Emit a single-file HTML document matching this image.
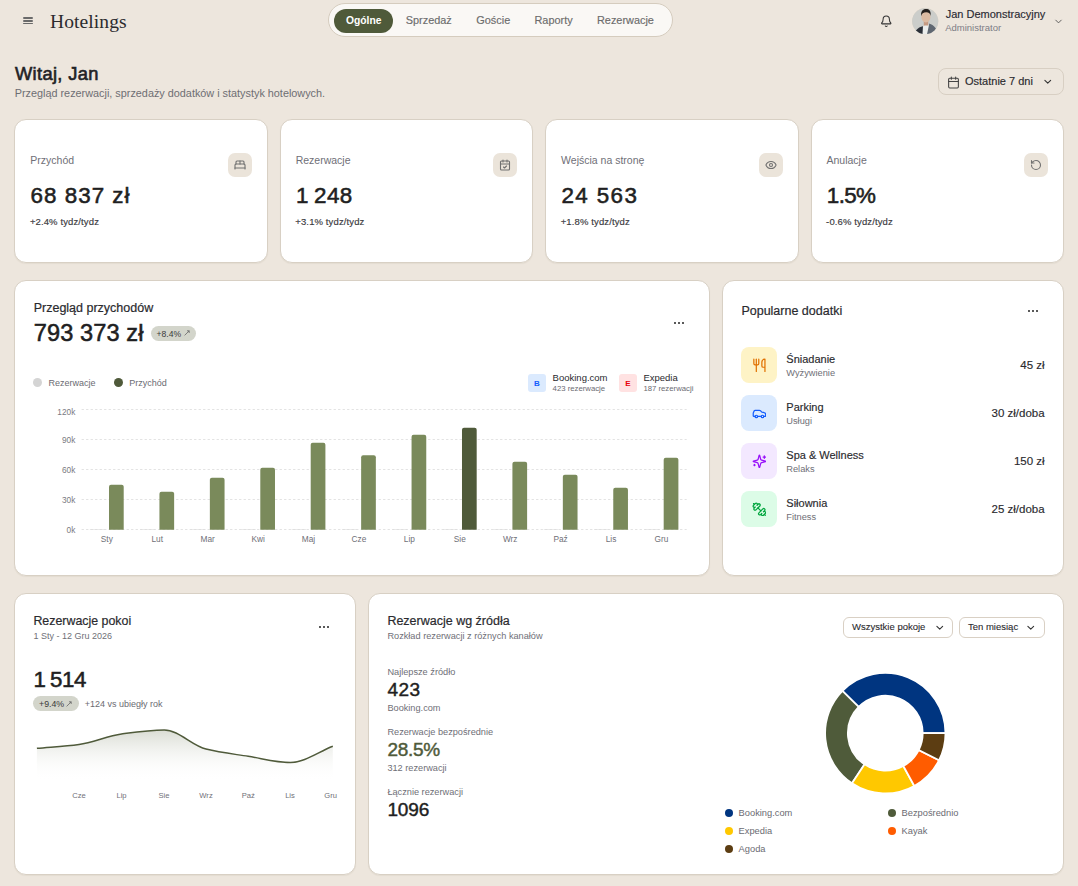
<!DOCTYPE html><html><head><meta charset="utf-8"><style>
html,body{margin:0;padding:0;}
body{width:1078px;height:886px;background:#ede6dd;position:relative;overflow:hidden;font-family:"Liberation Sans", sans-serif;}
.a{position:absolute;}
.t{position:absolute;white-space:nowrap;line-height:1;}
</style></head><body>
<div class="a" style="left:23.00px;top:17.25px;width:9.80px;height:1.50px;background:#6a6a6a;border-radius:1px;"></div>
<div class="a" style="left:23.00px;top:20.10px;width:9.80px;height:1.50px;background:#6a6a6a;border-radius:1px;"></div>
<div class="a" style="left:23.00px;top:22.95px;width:9.80px;height:1.50px;background:#6a6a6a;border-radius:1px;"></div>
<div class="t" style="top:12.47px;font-size:19.5px;font-weight:400;color:#2b2b2e;letter-spacing:0.1px;left:50.00px;font-family:'Liberation Serif', serif;">Hotelings</div>
<div class="a" style="left:327.60px;top:3.40px;width:345.20px;height:34.00px;background:#faf8f5;border:1px solid #d5ccbe;border-radius:17px;box-sizing:border-box;"></div>
<div class="a" style="left:334.00px;top:9.00px;width:59.00px;height:23.80px;background:#4f5a3a;border-radius:12px;"></div>
<div class="t" style="top:15.78px;font-size:10.3px;font-weight:700;color:#ffffff;left:346.00px;">Ogólne</div>
<div class="t" style="top:15.27px;font-size:10.9px;font-weight:400;color:#6c6c6c;left:405.80px;-webkit-text-stroke:0.15px #6c6c6c;">Sprzedaż</div>
<div class="t" style="top:15.27px;font-size:10.9px;font-weight:400;color:#6c6c6c;left:476.30px;-webkit-text-stroke:0.15px #6c6c6c;">Goście</div>
<div class="t" style="top:15.27px;font-size:10.9px;font-weight:400;color:#6c6c6c;left:534.50px;-webkit-text-stroke:0.15px #6c6c6c;">Raporty</div>
<div class="t" style="top:15.27px;font-size:10.9px;font-weight:400;color:#6c6c6c;left:597.00px;-webkit-text-stroke:0.15px #6c6c6c;">Rezerwacje</div>
<svg class="a" style="left:880.00px;top:14.50px;" width="12.5" height="12.5" viewBox="0 0 24 24" fill="none" stroke="#333" stroke-width="2" stroke-linecap="round" stroke-linejoin="round"><path d="M10.268 21a2 2 0 0 0 3.464 0"/><path d="M3.262 15.326A1 1 0 0 0 4 17h16a1 1 0 0 0 .74-1.673C19.41 13.956 18 12.499 18 8A6 6 0 0 0 6 8c0 4.499-1.411 5.956-2.738 7.326"/></svg>
<svg class="a" style="left:912.3px;top:7.5px" width="26.4" height="26.4" viewBox="0 0 26.4 26.4">
<defs><clipPath id="av"><circle cx="13.2" cy="13.2" r="13"/></clipPath></defs>
<circle cx="13.2" cy="13.2" r="13.1" fill="#dcd3c4"/>
<g clip-path="url(#av)">
<rect width="27" height="27" fill="#cbcdca"/>
<path d="M3.5 23 C6 19.5 8.5 18.6 11 18.2 L12 26.4 L4 26.4 Z" fill="#2b3038"/>
<path d="M10.5 26.4 L11 18.5 L13 17.2 L16 16 L17.5 19.5 L15.3 26.4 Z" fill="#eceeec"/>
<path d="M15 26.4 L17.3 15.6 C19.5 16.3 21.5 17.5 23.5 20 L26.4 23.5 L26.4 26.4 Z" fill="#5f6771"/>
<rect x="11.8" y="12" width="4.4" height="5.5" fill="#c59a82"/>
<ellipse cx="13.9" cy="8.7" rx="4.6" ry="5.8" fill="#dcbba2"/>
<path d="M9.1 8.2 C8.6 3 10.8 1 14 1 C17.2 1 19.2 2.8 18.7 8 C18.2 5.6 17 4.4 14.2 4.3 C11.4 4.3 9.8 5.4 9.1 8.2 Z" fill="#25201d"/>
</g></svg>
<div class="t" style="top:9.29px;font-size:11px;font-weight:400;color:#2a2a33;left:945.70px;-webkit-text-stroke:0.15px #2a2a33;">Jan Demonstracyjny</div>
<div class="t" style="top:22.96px;font-size:9.5px;font-weight:400;color:#7d7d86;left:945.20px;">Administrator</div>
<svg class="a" style="left:1052.50px;top:16.00px;" width="11" height="11" viewBox="0 0 24 24" fill="none" stroke="#555" stroke-width="2" stroke-linecap="round" stroke-linejoin="round"><path d="m6 9 6 6 6-6"/></svg>
<div class="t" style="top:64.91px;font-size:18.3px;font-weight:400;color:#222225;letter-spacing:0.35px;left:15.00px;-webkit-text-stroke:0.6px #222225;">Witaj, Jan</div>
<div class="t" style="top:88.32px;font-size:10.85px;font-weight:400;color:#6e6e73;left:14.70px;">Przegląd rezerwacji, sprzedaży dodatków i statystyk hotelowych.</div>
<div class="a" style="left:937.50px;top:68.00px;width:126.00px;height:26.50px;border:1px solid #d8cfc3;border-radius:8px;box-sizing:border-box;background:#ede6dd;"></div>
<svg class="a" style="left:946.50px;top:75.50px;" width="13" height="13" viewBox="0 0 24 24" fill="none" stroke="#444" stroke-width="2" stroke-linecap="round" stroke-linejoin="round"><path d="M8 2v4"/><path d="M16 2v4"/><rect width="18" height="18" x="3" y="4" rx="2"/><path d="M3 10h18"/></svg>
<div class="t" style="top:76.19px;font-size:11px;font-weight:400;color:#2a2a2e;left:965.00px;-webkit-text-stroke:0.15px #2a2a2e;">Ostatnie 7 dni</div>
<svg class="a" style="left:1042.30px;top:75.60px;" width="11.5" height="11.5" viewBox="0 0 24 24" fill="none" stroke="#333" stroke-width="2.3" stroke-linecap="round" stroke-linejoin="round"><path d="m6 9 6 6 6-6"/></svg>
<div class="a" style="left:14.00px;top:119.00px;width:254.00px;height:144.00px;background:#fff;border:1px solid #d8d0c4;border-radius:12px;box-sizing:border-box;box-shadow:0 1px 1px rgba(80,60,30,0.06);"></div>
<div class="t" style="top:155.21px;font-size:10.5px;font-weight:400;color:#6f6f77;left:30.30px;">Przychód</div>
<div class="a" style="left:228.20px;top:153.00px;width:24.00px;height:24.00px;background:#ebe4da;border-radius:7px;"></div>
<svg class="a" style="left:234.20px;top:158.60px;" width="12" height="12" viewBox="0 0 24 24" fill="none" stroke="#707070" stroke-width="2.2" stroke-linecap="round" stroke-linejoin="round"><path d="M2 20v-8a2 2 0 0 1 2-2h16a2 2 0 0 1 2 2v8"/><path d="M4 10V6a2 2 0 0 1 2-2h12a2 2 0 0 1 2 2v4"/><path d="M12 4v6"/><path d="M2 18h20"/></svg>
<div class="t" style="top:185.24px;font-size:22.4px;font-weight:400;color:#1f1f22;letter-spacing:1.0px;left:30.60px;-webkit-text-stroke:0.55px #1f1f22;">68 837 zł</div>
<div class="t" style="top:217.16px;font-size:9.5px;font-weight:400;color:#3a3a40;letter-spacing:0.12px;left:29.90px;-webkit-text-stroke:0.15px #3a3a40;">+2.4% tydz/tydz</div>
<div class="a" style="left:280.00px;top:119.00px;width:253.00px;height:144.00px;background:#fff;border:1px solid #d8d0c4;border-radius:12px;box-sizing:border-box;box-shadow:0 1px 1px rgba(80,60,30,0.06);"></div>
<div class="t" style="top:155.21px;font-size:10.5px;font-weight:400;color:#6f6f77;left:295.70px;">Rezerwacje</div>
<div class="a" style="left:492.80px;top:153.00px;width:24.00px;height:24.00px;background:#ebe4da;border-radius:7px;"></div>
<svg class="a" style="left:498.80px;top:158.60px;" width="12" height="12" viewBox="0 0 24 24" fill="none" stroke="#707070" stroke-width="2.2" stroke-linecap="round" stroke-linejoin="round"><path d="M8 2v4"/><path d="M16 2v4"/><rect width="18" height="18" x="3" y="4" rx="2"/><path d="M3 10h18"/><path d="m9 16 2 2 4-4"/></svg>
<div class="t" style="top:185.24px;font-size:22.4px;font-weight:400;color:#1f1f22;letter-spacing:0.35px;left:296.00px;-webkit-text-stroke:0.55px #1f1f22;word-spacing:-1.3px;">1 248</div>
<div class="t" style="top:217.16px;font-size:9.5px;font-weight:400;color:#3a3a40;letter-spacing:0.12px;left:295.30px;-webkit-text-stroke:0.15px #3a3a40;">+3.1% tydz/tydz</div>
<div class="a" style="left:545.00px;top:119.00px;width:254.00px;height:144.00px;background:#fff;border:1px solid #d8d0c4;border-radius:12px;box-sizing:border-box;box-shadow:0 1px 1px rgba(80,60,30,0.06);"></div>
<div class="t" style="top:155.21px;font-size:10.5px;font-weight:400;color:#6f6f77;left:561.10px;">Wejścia na stronę</div>
<div class="a" style="left:759.00px;top:153.00px;width:24.00px;height:24.00px;background:#ebe4da;border-radius:7px;"></div>
<svg class="a" style="left:765.00px;top:158.60px;" width="12" height="12" viewBox="0 0 24 24" fill="none" stroke="#707070" stroke-width="2.2" stroke-linecap="round" stroke-linejoin="round"><path d="M2.062 12.348a1 1 0 0 1 0-.696 10.75 10.75 0 0 1 19.876 0 1 1 0 0 1 0 .696 10.75 10.75 0 0 1-19.876 0"/><circle cx="12" cy="12" r="3"/></svg>
<div class="t" style="top:185.24px;font-size:22.4px;font-weight:400;color:#1f1f22;letter-spacing:1.4px;left:561.40px;-webkit-text-stroke:0.55px #1f1f22;">24 563</div>
<div class="t" style="top:217.16px;font-size:9.5px;font-weight:400;color:#3a3a40;letter-spacing:0.12px;left:560.70px;-webkit-text-stroke:0.15px #3a3a40;">+1.8% tydz/tydz</div>
<div class="a" style="left:811.00px;top:119.00px;width:253.00px;height:144.00px;background:#fff;border:1px solid #d8d0c4;border-radius:12px;box-sizing:border-box;box-shadow:0 1px 1px rgba(80,60,30,0.06);"></div>
<div class="t" style="top:155.21px;font-size:10.5px;font-weight:400;color:#6f6f77;left:826.50px;">Anulacje</div>
<div class="a" style="left:1024.20px;top:153.00px;width:24.00px;height:24.00px;background:#ebe4da;border-radius:7px;"></div>
<svg class="a" style="left:1030.20px;top:158.60px;" width="12" height="12" viewBox="0 0 24 24" fill="none" stroke="#707070" stroke-width="2.2" stroke-linecap="round" stroke-linejoin="round"><path d="M3 12a9 9 0 1 0 9-9 9.75 9.75 0 0 0-6.74 2.74L3 8"/><path d="M3 3v5h5"/></svg>
<div class="t" style="top:185.24px;font-size:22.4px;font-weight:400;color:#1f1f22;letter-spacing:-0.6px;left:826.80px;-webkit-text-stroke:0.55px #1f1f22;">1.5%</div>
<div class="t" style="top:217.16px;font-size:9.5px;font-weight:400;color:#3a3a40;letter-spacing:0.12px;left:826.10px;-webkit-text-stroke:0.15px #3a3a40;">-0.6% tydz/tydz</div>
<div class="a" style="left:14.00px;top:280.00px;width:696.00px;height:296.00px;background:#fff;border:1px solid #d8d0c4;border-radius:12px;box-sizing:border-box;box-shadow:0 1px 1px rgba(80,60,30,0.06);"></div>
<div class="t" style="top:301.92px;font-size:12.5px;font-weight:400;color:#2a2a2e;left:33.70px;-webkit-text-stroke:0.2px #2a2a2e;">Przegląd przychodów</div>
<div class="t" style="top:321.62px;font-size:23.6px;font-weight:400;color:#1f1f22;letter-spacing:0.1px;left:33.70px;-webkit-text-stroke:0.55px #1f1f22;">793 373 zł</div>
<div class="a" style="left:150.80px;top:326.00px;width:45.20px;height:15.20px;background:#d3d5cb;border-radius:8px;"></div>
<div class="t" style="top:330.12px;font-size:8.6px;font-weight:400;color:#3a3a3a;left:156.50px;">+8.4%</div>
<svg class="a" style="left:184.3px;top:330.3px" width="6" height="6" viewBox="0 0 6 6" fill="none" stroke="#666" stroke-width="0.8"><path d="M0.6 5.4 L5.2 0.8 M3 0.8 H5.2 V3"/></svg>
<div class="a" style="left:673.80px;top:322.00px;width:2.00px;height:2.00px;background:#222;border-radius:1px;"></div>
<div class="a" style="left:678.00px;top:322.00px;width:2.00px;height:2.00px;background:#222;border-radius:1px;"></div>
<div class="a" style="left:682.20px;top:322.00px;width:2.00px;height:2.00px;background:#222;border-radius:1px;"></div>
<div class="a" style="left:33.00px;top:378.00px;width:9.00px;height:9.00px;background:#d4d4d4;border-radius:50%;"></div>
<div class="t" style="top:379.18px;font-size:9px;font-weight:400;color:#6b6b72;left:48.60px;">Rezerwacje</div>
<div class="a" style="left:114.00px;top:378.00px;width:9.00px;height:9.00px;background:#4f5a3a;border-radius:50%;"></div>
<div class="t" style="top:379.18px;font-size:9px;font-weight:400;color:#6b6b72;left:129.30px;">Przychód</div>
<div class="a" style="left:528.00px;top:374.00px;width:18.00px;height:18.00px;background:#dbeafe;border-radius:3px;"></div>
<div class="t" style="top:379.83px;font-size:8px;font-weight:700;color:#155dfc;left:537.00px;transform:translateX(-50%);">B</div>
<div class="t" style="top:372.96px;font-size:9.5px;font-weight:400;color:#2a2a2e;left:552.60px;">Booking.com</div>
<div class="t" style="top:385.04px;font-size:7.75px;font-weight:400;color:#6b6b72;left:552.60px;">423 rezerwacje</div>
<div class="a" style="left:619.00px;top:374.00px;width:18.00px;height:18.00px;background:#ffe2e2;border-radius:3px;"></div>
<div class="t" style="top:379.83px;font-size:8px;font-weight:700;color:#e7000b;left:628.00px;transform:translateX(-50%);">E</div>
<div class="t" style="top:372.96px;font-size:9.5px;font-weight:400;color:#2a2a2e;left:643.40px;">Expedia</div>
<div class="t" style="top:385.04px;font-size:7.75px;font-weight:400;color:#6b6b72;left:643.40px;">187 rezerwacji</div>
<div class="t" style="top:407.77px;font-size:8.3px;font-weight:400;color:#7a7a82;right:1002.70px;">120k</div>
<div class="t" style="top:435.87px;font-size:8.3px;font-weight:400;color:#7a7a82;right:1002.70px;">90k</div>
<div class="t" style="top:465.87px;font-size:8.3px;font-weight:400;color:#7a7a82;right:1002.70px;">60k</div>
<div class="t" style="top:495.87px;font-size:8.3px;font-weight:400;color:#7a7a82;right:1002.70px;">30k</div>
<div class="t" style="top:525.87px;font-size:8.3px;font-weight:400;color:#7a7a82;right:1002.70px;">0k</div>
<div class="t" style="top:534.87px;font-size:8.3px;font-weight:400;color:#6f6f77;left:106.81px;transform:translateX(-50%);">Sty</div>
<div class="t" style="top:534.87px;font-size:8.3px;font-weight:400;color:#6f6f77;left:157.24px;transform:translateX(-50%);">Lut</div>
<div class="t" style="top:534.87px;font-size:8.3px;font-weight:400;color:#6f6f77;left:207.66px;transform:translateX(-50%);">Mar</div>
<div class="t" style="top:534.87px;font-size:8.3px;font-weight:400;color:#6f6f77;left:258.09px;transform:translateX(-50%);">Kwi</div>
<div class="t" style="top:534.87px;font-size:8.3px;font-weight:400;color:#6f6f77;left:308.51px;transform:translateX(-50%);">Maj</div>
<div class="t" style="top:534.87px;font-size:8.3px;font-weight:400;color:#6f6f77;left:358.94px;transform:translateX(-50%);">Cze</div>
<div class="t" style="top:534.87px;font-size:8.3px;font-weight:400;color:#6f6f77;left:409.36px;transform:translateX(-50%);">Lip</div>
<div class="t" style="top:534.87px;font-size:8.3px;font-weight:400;color:#6f6f77;left:459.79px;transform:translateX(-50%);">Sie</div>
<div class="t" style="top:534.87px;font-size:8.3px;font-weight:400;color:#6f6f77;left:510.21px;transform:translateX(-50%);">Wrz</div>
<div class="t" style="top:534.87px;font-size:8.3px;font-weight:400;color:#6f6f77;left:560.64px;transform:translateX(-50%);">Paź</div>
<div class="t" style="top:534.87px;font-size:8.3px;font-weight:400;color:#6f6f77;left:611.06px;transform:translateX(-50%);">Lis</div>
<div class="t" style="top:534.87px;font-size:8.3px;font-weight:400;color:#6f6f77;left:661.49px;transform:translateX(-50%);">Gru</div>
<svg class="a" style="left:0;top:0" width="1078" height="600"><line x1="81.6" y1="409.5" x2="686.7" y2="409.5" stroke="#e3e3e3" stroke-width="1" stroke-dasharray="2.3 2.2"/><line x1="81.6" y1="439.5" x2="686.7" y2="439.5" stroke="#e3e3e3" stroke-width="1" stroke-dasharray="2.3 2.2"/><line x1="81.6" y1="469.5" x2="686.7" y2="469.5" stroke="#e3e3e3" stroke-width="1" stroke-dasharray="2.3 2.2"/><line x1="81.6" y1="499.5" x2="686.7" y2="499.5" stroke="#e3e3e3" stroke-width="1" stroke-dasharray="2.3 2.2"/><line x1="81.6" y1="529.5" x2="686.7" y2="529.5" stroke="#e3e3e3" stroke-width="1" stroke-dasharray="2.3 2.2"/><path d="M109.01 529.8 V486.80 Q109.01 484.80 111.01 484.80 H121.71 Q123.71 484.80 123.71 486.80 V529.8 Z" fill="#7a8a5b"/><rect x="89.81" y="529.2" width="14.7" height="0.6" fill="#dcdcdc"/><path d="M159.44 529.8 V493.80 Q159.44 491.80 161.44 491.80 H172.14 Q174.14 491.80 174.14 493.80 V529.8 Z" fill="#7a8a5b"/><rect x="140.24" y="529.2" width="14.7" height="0.6" fill="#dcdcdc"/><path d="M209.86 529.8 V479.80 Q209.86 477.80 211.86 477.80 H222.56 Q224.56 477.80 224.56 479.80 V529.8 Z" fill="#7a8a5b"/><rect x="190.66" y="529.2" width="14.7" height="0.6" fill="#dcdcdc"/><path d="M260.29 529.8 V469.80 Q260.29 467.80 262.29 467.80 H272.99 Q274.99 467.80 274.99 469.80 V529.8 Z" fill="#7a8a5b"/><rect x="241.09" y="529.2" width="14.7" height="0.6" fill="#dcdcdc"/><path d="M310.71 529.8 V444.80 Q310.71 442.80 312.71 442.80 H323.41 Q325.41 442.80 325.41 444.80 V529.8 Z" fill="#7a8a5b"/><rect x="291.51" y="529.2" width="14.7" height="0.6" fill="#dcdcdc"/><path d="M361.14 529.8 V457.30 Q361.14 455.30 363.14 455.30 H373.84 Q375.84 455.30 375.84 457.30 V529.8 Z" fill="#7a8a5b"/><rect x="341.94" y="529.2" width="14.7" height="0.6" fill="#dcdcdc"/><path d="M411.56 529.8 V436.80 Q411.56 434.80 413.56 434.80 H424.26 Q426.26 434.80 426.26 436.80 V529.8 Z" fill="#7a8a5b"/><rect x="392.36" y="529.2" width="14.7" height="0.6" fill="#dcdcdc"/><path d="M461.99 529.8 V429.80 Q461.99 427.80 463.99 427.80 H474.69 Q476.69 427.80 476.69 429.80 V529.8 Z" fill="#4f5a3a"/><rect x="442.79" y="529.2" width="14.7" height="0.6" fill="#dcdcdc"/><path d="M512.41 529.8 V463.80 Q512.41 461.80 514.41 461.80 H525.11 Q527.11 461.80 527.11 463.80 V529.8 Z" fill="#7a8a5b"/><rect x="493.21" y="529.2" width="14.7" height="0.6" fill="#dcdcdc"/><path d="M562.84 529.8 V476.80 Q562.84 474.80 564.84 474.80 H575.54 Q577.54 474.80 577.54 476.80 V529.8 Z" fill="#7a8a5b"/><rect x="543.64" y="529.2" width="14.7" height="0.6" fill="#dcdcdc"/><path d="M613.26 529.8 V489.80 Q613.26 487.80 615.26 487.80 H625.96 Q627.96 487.80 627.96 489.80 V529.8 Z" fill="#7a8a5b"/><rect x="594.06" y="529.2" width="14.7" height="0.6" fill="#dcdcdc"/><path d="M663.69 529.8 V459.80 Q663.69 457.80 665.69 457.80 H676.39 Q678.39 457.80 678.39 459.80 V529.8 Z" fill="#7a8a5b"/><rect x="644.49" y="529.2" width="14.7" height="0.6" fill="#dcdcdc"/></svg>
<div class="a" style="left:722.00px;top:280.00px;width:342.00px;height:296.00px;background:#fff;border:1px solid #d8d0c4;border-radius:12px;box-sizing:border-box;box-shadow:0 1px 1px rgba(80,60,30,0.06);"></div>
<div class="t" style="top:305.22px;font-size:12.5px;font-weight:400;color:#2a2a2e;left:741.40px;-webkit-text-stroke:0.2px #2a2a2e;">Popularne dodatki</div>
<div class="a" style="left:1028.30px;top:309.80px;width:2.00px;height:2.00px;background:#222;border-radius:1px;"></div>
<div class="a" style="left:1032.00px;top:309.80px;width:2.00px;height:2.00px;background:#222;border-radius:1px;"></div>
<div class="a" style="left:1035.70px;top:309.80px;width:2.00px;height:2.00px;background:#222;border-radius:1px;"></div>
<div class="a" style="left:741.00px;top:347.00px;width:36.00px;height:36.00px;background:#fef3c6;border-radius:8px;"></div>
<svg class="a" style="left:751.60px;top:357.60px;" width="14.8" height="14.8" viewBox="0 0 24 24" fill="none" stroke="#e17100" stroke-width="2" stroke-linecap="round" stroke-linejoin="round"><path d="M3 2v7c0 1.1.9 2 2 2h4a2 2 0 0 0 2-2V2"/><path d="M7 2v20"/><path d="M21 15V2a5 5 0 0 0-5 5v6c0 1.1.9 2 2 2h3Zm0 0v7"/></svg>
<div class="t" style="top:354.29px;font-size:11px;font-weight:400;color:#2a2a2e;left:786.30px;-webkit-text-stroke:0.15px #2a2a2e;">Śniadanie</div>
<div class="t" style="top:368.97px;font-size:9.25px;font-weight:400;color:#6f6f77;left:786.30px;">Wyżywienie</div>
<div class="t" style="top:359.77px;font-size:11.5px;font-weight:400;color:#2a2a2e;right:33.40px;-webkit-text-stroke:0.15px #2a2a2e;">45 zł</div>
<div class="a" style="left:741.00px;top:395.00px;width:36.00px;height:36.00px;background:#dbeafe;border-radius:8px;"></div>
<svg class="a" style="left:751.60px;top:405.60px;" width="14.8" height="14.8" viewBox="0 0 24 24" fill="none" stroke="#155dfc" stroke-width="2" stroke-linecap="round" stroke-linejoin="round"><path d="M19 17h2c.6 0 1-.4 1-1v-3c0-.9-.7-1.7-1.5-1.9C18.7 10.6 16 10 16 10s-1.3-1.4-2.2-2.3c-.5-.4-1.1-.7-1.8-.7H5c-.6 0-1.1.4-1.4.9l-1.4 2.9A3.7 3.7 0 0 0 2 12v4c0 .6.4 1 1 1h2"/><circle cx="7" cy="17" r="2"/><path d="M9 17h6"/><circle cx="17" cy="17" r="2"/></svg>
<div class="t" style="top:402.29px;font-size:11px;font-weight:400;color:#2a2a2e;left:786.30px;-webkit-text-stroke:0.15px #2a2a2e;">Parking</div>
<div class="t" style="top:416.97px;font-size:9.25px;font-weight:400;color:#6f6f77;left:786.30px;">Usługi</div>
<div class="t" style="top:407.77px;font-size:11.5px;font-weight:400;color:#2a2a2e;right:33.40px;-webkit-text-stroke:0.15px #2a2a2e;">30 zł/doba</div>
<div class="a" style="left:741.00px;top:443.00px;width:36.00px;height:36.00px;background:#f3e8ff;border-radius:8px;"></div>
<svg class="a" style="left:751.60px;top:453.60px;" width="14.8" height="14.8" viewBox="0 0 24 24" fill="none" stroke="#9810fa" stroke-width="2" stroke-linecap="round" stroke-linejoin="round"><path d="M9.937 15.5A2 2 0 0 0 8.5 14.063l-6.135-1.582a.5.5 0 0 1 0-.962L8.5 9.936A2 2 0 0 0 9.937 8.5l1.582-6.135a.5.5 0 0 1 .963 0L14.063 8.5A2 2 0 0 0 15.5 9.937l6.135 1.581a.5.5 0 0 1 0 .964L15.5 14.063a2 2 0 0 0-1.437 1.437l-1.582 6.135a.5.5 0 0 1-.963 0z"/><path d="M20 3v4"/><path d="M22 5h-4"/><path d="M4 17v2"/><path d="M5 18H3"/></svg>
<div class="t" style="top:450.29px;font-size:11px;font-weight:400;color:#2a2a2e;left:786.30px;-webkit-text-stroke:0.15px #2a2a2e;">Spa &amp; Wellness</div>
<div class="t" style="top:464.97px;font-size:9.25px;font-weight:400;color:#6f6f77;left:786.30px;">Relaks</div>
<div class="t" style="top:455.77px;font-size:11.5px;font-weight:400;color:#2a2a2e;right:33.40px;-webkit-text-stroke:0.15px #2a2a2e;">150 zł</div>
<div class="a" style="left:741.00px;top:491.00px;width:36.00px;height:36.00px;background:#dcfce7;border-radius:8px;"></div>
<svg class="a" style="left:751.60px;top:501.60px;" width="14.8" height="14.8" viewBox="0 0 24 24" fill="none" stroke="#00a63e" stroke-width="2" stroke-linecap="round" stroke-linejoin="round"><g transform="translate(24 0) scale(-1 1)"><path d="M17.596 12.768a2 2 0 1 0 2.829-2.829l-1.768-1.767a2 2 0 0 0 2.828-2.829l-2.828-2.828a2 2 0 0 0-2.829 2.828l-1.767-1.768a2 2 0 1 0-2.829 2.829z"/><path d="m2.5 21.5 1.4-1.4"/><path d="m20.1 3.9 1.4-1.4"/><path d="M5.343 21.485a2 2 0 1 0 2.829-2.828l1.767 1.768a2 2 0 1 0 2.829-2.829l-6.364-6.364a2 2 0 1 0-2.829 2.829l1.768 1.767a2 2 0 0 0-2.828 2.829z"/><path d="m9.6 14.4 4.8-4.8"/></g></svg>
<div class="t" style="top:498.29px;font-size:11px;font-weight:400;color:#2a2a2e;left:786.30px;-webkit-text-stroke:0.15px #2a2a2e;">Siłownia</div>
<div class="t" style="top:512.97px;font-size:9.25px;font-weight:400;color:#6f6f77;left:786.30px;">Fitness</div>
<div class="t" style="top:503.77px;font-size:11.5px;font-weight:400;color:#2a2a2e;right:33.40px;-webkit-text-stroke:0.15px #2a2a2e;">25 zł/doba</div>
<div class="a" style="left:14.00px;top:593.00px;width:342.00px;height:282.00px;background:#fff;border:1px solid #d8d0c4;border-radius:12px;box-sizing:border-box;box-shadow:0 1px 1px rgba(80,60,30,0.06);"></div>
<div class="t" style="top:615.30px;font-size:12.4px;font-weight:400;color:#2a2a2e;left:33.40px;-webkit-text-stroke:0.2px #2a2a2e;">Rezerwacje pokoi</div>
<div class="t" style="top:632.38px;font-size:9px;font-weight:400;color:#6f6f77;left:33.40px;">1 Sty - 12 Gru 2026</div>
<div class="a" style="left:319.30px;top:625.60px;width:2.00px;height:2.00px;background:#222;border-radius:1px;"></div>
<div class="a" style="left:323.00px;top:625.60px;width:2.00px;height:2.00px;background:#222;border-radius:1px;"></div>
<div class="a" style="left:326.70px;top:625.60px;width:2.00px;height:2.00px;background:#222;border-radius:1px;"></div>
<div class="t" style="top:668.92px;font-size:22.3px;font-weight:400;color:#1f1f22;letter-spacing:-0.45px;left:33.60px;word-spacing:-1.2px;-webkit-text-stroke:0.55px #1f1f22;">1 514</div>
<div class="a" style="left:33.00px;top:696.30px;width:46.00px;height:14.50px;background:#d3d5cb;border-radius:8px;"></div>
<div class="t" style="top:699.85px;font-size:8.8px;font-weight:400;color:#3a3a3a;left:39.00px;">+9.4%</div>
<svg class="a" style="left:66.2px;top:700.8px" width="6" height="6" viewBox="0 0 6 6" fill="none" stroke="#666" stroke-width="0.8"><path d="M0.6 5.4 L5.2 0.8 M3 0.8 H5.2 V3"/></svg>
<div class="t" style="top:700.38px;font-size:9px;font-weight:400;color:#6b6b72;left:84.80px;">+124 vs ubiegły rok</div>
<svg class="a" style="left:0;top:0" width="400" height="886"><defs><linearGradient id="lg" x1="0" y1="0" x2="0" y2="1"><stop offset="0" stop-color="#d3d6cc" stop-opacity="0.85"/><stop offset="1" stop-color="#ffffff" stop-opacity="0"/></linearGradient></defs>
<path d="M36.90,748.30 C50.93,747.00 64.97,746.28 79.00,744.40 C93.17,742.50 107.33,735.95 121.50,734.00 C135.77,732.03 150.03,729.90 164.30,729.90 C178.20,729.90 192.10,745.64 206.00,749.10 C220.07,752.61 234.13,754.08 248.20,756.30 C262.30,758.52 276.40,762.50 290.50,762.50 C304.60,762.50 318.70,751.63 332.80,746.20 L332.8,781 L36.9,781 Z" fill="url(#lg)"/>
<path d="M36.90,748.30 C50.93,747.00 64.97,746.28 79.00,744.40 C93.17,742.50 107.33,735.95 121.50,734.00 C135.77,732.03 150.03,729.90 164.30,729.90 C178.20,729.90 192.10,745.64 206.00,749.10 C220.07,752.61 234.13,754.08 248.20,756.30 C262.30,758.52 276.40,762.50 290.50,762.50 C304.60,762.50 318.70,751.63 332.80,746.20" fill="none" stroke="#4f5a3a" stroke-width="1.5"/></svg>
<div class="t" style="top:792.37px;font-size:7.6px;font-weight:400;color:#707078;left:79.00px;transform:translateX(-50%);">Cze</div>
<div class="t" style="top:792.37px;font-size:7.6px;font-weight:400;color:#707078;left:121.50px;transform:translateX(-50%);">Lip</div>
<div class="t" style="top:792.37px;font-size:7.6px;font-weight:400;color:#707078;left:164.00px;transform:translateX(-50%);">Sie</div>
<div class="t" style="top:792.37px;font-size:7.6px;font-weight:400;color:#707078;left:206.00px;transform:translateX(-50%);">Wrz</div>
<div class="t" style="top:792.37px;font-size:7.6px;font-weight:400;color:#707078;left:248.20px;transform:translateX(-50%);">Paź</div>
<div class="t" style="top:792.37px;font-size:7.6px;font-weight:400;color:#707078;left:290.00px;transform:translateX(-50%);">Lis</div>
<div class="t" style="top:792.37px;font-size:7.6px;font-weight:400;color:#707078;left:330.70px;transform:translateX(-50%);">Gru</div>
<div class="a" style="left:368.00px;top:593.00px;width:696.00px;height:282.00px;background:#fff;border:1px solid #d8d0c4;border-radius:12px;box-sizing:border-box;box-shadow:0 1px 1px rgba(80,60,30,0.06);"></div>
<div class="t" style="top:615.12px;font-size:12.5px;font-weight:400;color:#2a2a2e;left:387.40px;-webkit-text-stroke:0.2px #2a2a2e;">Rezerwacje wg źródła</div>
<div class="t" style="top:632.31px;font-size:9.2px;font-weight:400;color:#6f6f77;left:387.40px;">Rozkład rezerwacji z różnych kanałów</div>
<div class="t" style="top:668.01px;font-size:9.2px;font-weight:400;color:#6f6f77;left:387.40px;">Najlepsze źródło</div>
<div class="t" style="top:679.72px;font-size:19px;font-weight:400;color:#1f1f22;letter-spacing:0.5px;left:387.40px;-webkit-text-stroke:0.45px #1f1f22;">423</div>
<div class="t" style="top:703.61px;font-size:9.2px;font-weight:400;color:#6f6f77;left:387.40px;">Booking.com</div>
<div class="t" style="top:727.71px;font-size:9.2px;font-weight:400;color:#6f6f77;left:387.40px;">Rezerwacje bezpośrednie</div>
<div class="t" style="top:739.72px;font-size:19px;font-weight:400;color:#4f5a3a;letter-spacing:-0.3px;left:387.40px;-webkit-text-stroke:0.45px #4f5a3a;">28.5%</div>
<div class="t" style="top:763.71px;font-size:9.2px;font-weight:400;color:#6f6f77;left:387.40px;">312 rezerwacji</div>
<div class="t" style="top:788.01px;font-size:9.2px;font-weight:400;color:#6f6f77;left:387.40px;">Łącznie rezerwacji</div>
<div class="t" style="top:799.62px;font-size:19px;font-weight:400;color:#1f1f22;letter-spacing:-0.15px;left:387.40px;-webkit-text-stroke:0.45px #1f1f22;">1096</div>
<div class="a" style="left:843.30px;top:617.40px;width:109.40px;height:20.30px;border:1px solid #d9d0c4;border-radius:6px;box-sizing:border-box;background:#fff;"></div>
<div class="t" style="top:622.06px;font-size:9.5px;font-weight:400;color:#2a2a2e;left:852.00px;-webkit-text-stroke:0.1px #2a2a2e;">Wszystkie pokoje</div>
<svg class="a" style="left:933.50px;top:621.50px;" width="11.5" height="11.5" viewBox="0 0 24 24" fill="none" stroke="#333" stroke-width="2.3" stroke-linecap="round" stroke-linejoin="round"><path d="m6 9 6 6 6-6"/></svg>
<div class="a" style="left:959.30px;top:617.40px;width:85.40px;height:20.30px;border:1px solid #d9d0c4;border-radius:6px;box-sizing:border-box;background:#fff;"></div>
<div class="t" style="top:622.06px;font-size:9.5px;font-weight:400;color:#2a2a2e;left:968.00px;-webkit-text-stroke:0.1px #2a2a2e;">Ten miesiąc</div>
<svg class="a" style="left:1025.30px;top:621.50px;" width="11.5" height="11.5" viewBox="0 0 24 24" fill="none" stroke="#333" stroke-width="2.3" stroke-linecap="round" stroke-linejoin="round"><path d="m6 9 6 6 6-6"/></svg>
<svg class="a" style="left:0;top:0" width="1078" height="886"><path d="M945.50,733.20 A60.2,60.2 0 0 0 842.44,690.93 L858.67,706.94 A37.4,37.4 0 0 1 922.70,733.20 Z" fill="#003580" stroke="#fff" stroke-width="1.8" stroke-linejoin="miter"/><path d="M842.44,690.93 A60.2,60.2 0 0 0 851.99,783.34 L864.60,764.35 A37.4,37.4 0 0 1 858.67,706.94 Z" fill="#4f5b3a" stroke="#fff" stroke-width="1.8" stroke-linejoin="miter"/><path d="M851.99,783.34 A60.2,60.2 0 0 0 914.30,785.95 L903.32,765.97 A37.4,37.4 0 0 1 864.60,764.35 Z" fill="#ffc800" stroke="#fff" stroke-width="1.8" stroke-linejoin="miter"/><path d="M914.30,785.95 A60.2,60.2 0 0 0 939.08,760.25 L918.71,750.00 A37.4,37.4 0 0 1 903.32,765.97 Z" fill="#ff5c00" stroke="#fff" stroke-width="1.8" stroke-linejoin="miter"/><path d="M939.08,760.25 A60.2,60.2 0 0 0 945.50,733.20 L922.70,733.20 A37.4,37.4 0 0 1 918.71,750.00 Z" fill="#5c3d12" stroke="#fff" stroke-width="1.8" stroke-linejoin="miter"/></svg>
<div class="a" style="left:725.00px;top:809.30px;width:8.00px;height:8.00px;background:#003580;border-radius:50%;"></div>
<div class="t" style="top:809.33px;font-size:9.3px;font-weight:400;color:#6b6b72;left:738.60px;">Booking.com</div>
<div class="a" style="left:888.00px;top:809.30px;width:8.00px;height:8.00px;background:#4f5b3a;border-radius:50%;"></div>
<div class="t" style="top:809.33px;font-size:9.3px;font-weight:400;color:#6b6b72;left:901.60px;">Bezpośrednio</div>
<div class="a" style="left:725.00px;top:827.40px;width:8.00px;height:8.00px;background:#ffc800;border-radius:50%;"></div>
<div class="t" style="top:827.43px;font-size:9.3px;font-weight:400;color:#6b6b72;left:738.60px;">Expedia</div>
<div class="a" style="left:888.00px;top:827.40px;width:8.00px;height:8.00px;background:#ff5c00;border-radius:50%;"></div>
<div class="t" style="top:827.43px;font-size:9.3px;font-weight:400;color:#6b6b72;left:901.60px;">Kayak</div>
<div class="a" style="left:725.00px;top:845.40px;width:8.00px;height:8.00px;background:#5c3d12;border-radius:50%;"></div>
<div class="t" style="top:845.43px;font-size:9.3px;font-weight:400;color:#6b6b72;left:738.60px;">Agoda</div>
</body></html>
